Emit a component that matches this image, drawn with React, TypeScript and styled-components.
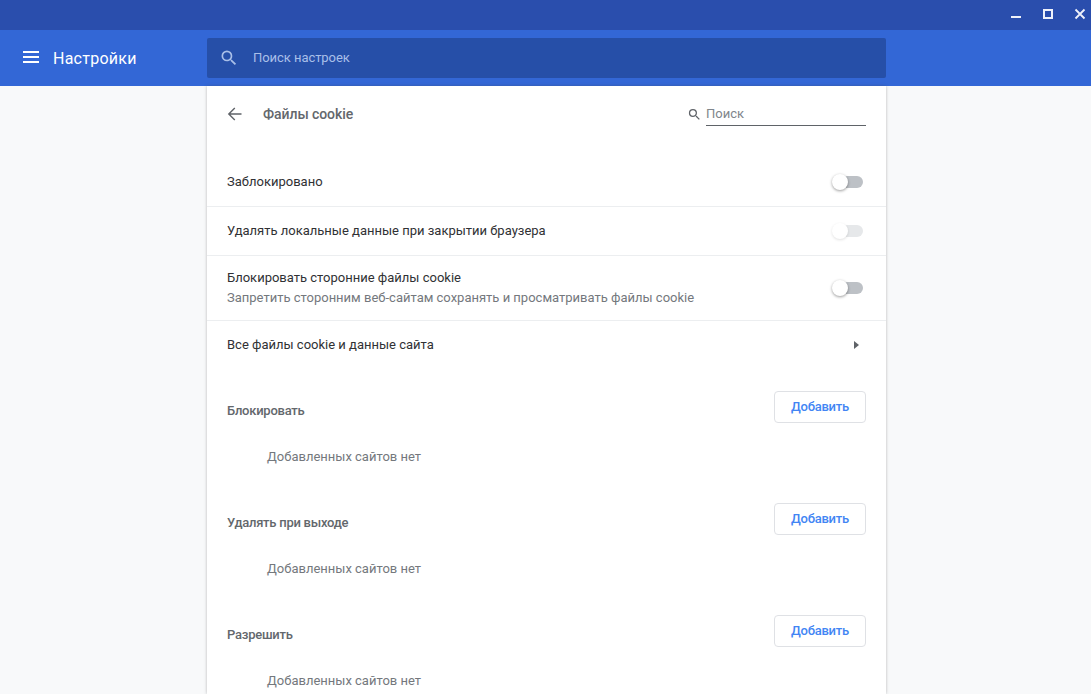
import React from "react";
import styled, { createGlobalStyle } from "styled-components";

const Global = createGlobalStyle`
  html, body { margin: 0; height: 100%; overflow: hidden; background: #f8f9fa; }
  body { font-family: Roboto, "Noto Sans", sans-serif; font-size: 13px; }
  * { box-sizing: border-box; }
`;

const Page = styled.div`
  width: 1091px;
  height: 694px;
  display: flex;
  flex-direction: column;
  overflow: hidden;
`;
const TitleBar = styled.div`
  height: 30px;
  flex: none;
  background: #2a4ead;
  display: flex;
  justify-content: flex-end;
  align-items: flex-start;
  gap: 10px;
  color: #eef1fa;
`;
const WinButton = styled.div`
  width: 22px;
  height: 30px;
  padding-top: 8px;
  display: flex;
  justify-content: center;
  svg { display: block; }
`;
const Header = styled.header`
  height: 56px;
  flex: none;
  background: #3367d6;
  display: flex;
  align-items: center;
`;
const Brand = styled.div`
  width: 207px;
  flex: none;
  display: flex;
  align-items: center;
  padding-left: 23px;
  gap: 12px;
  color: #fff;
  font-size: 16px;
  letter-spacing: 0.25px;
`;
const HeaderSearch = styled.div`
  width: 679px;
  height: 40px;
  background: #264fa8;
  border-radius: 2px;
  display: flex;
  align-items: center;
  padding-left: 12px;
  gap: 14px;
  color: #a9bfe8;
  font-size: 13px;
  letter-spacing: -0.05px;
`;
const SearchLabel = styled.span`
  margin-bottom: 2px;
`;
const Body = styled.main`
  flex: 1;
  display: flex;
  padding-left: 207px;
  min-height: 0;
`;
const Card = styled.section`
  width: 679px;
  background: #fff;
  box-shadow: 0 0 3px rgba(60, 64, 67, 0.35);
  overflow: hidden;
  padding-bottom: 40px;
`;
const SubPage = styled.div`
  height: 56px;
  display: flex;
  align-items: center;
  padding: 0 20px 0 19px;
  margin-bottom: 16px;
`;
const BackButton = styled.div`
  width: 18px;
  height: 18px;
  margin-right: 19px;
  color: #5f6368;
  svg { display: block; }
`;
const SubTitle = styled.h1`
  margin: 0;
  font-size: 14px;
  font-weight: 500;
  letter-spacing: -0.08px;
  color: #63676c;
  flex: 1;
`;
const MiniSearch = styled.div`
  display: flex;
  align-items: center;
  gap: 4px;
`;
const MiniInput = styled.div`
  width: 160px;
  height: 24px;
  border-bottom: 1px solid #5f6368;
  color: #80868b;
  font-size: 13px;
  line-height: 24px;
`;
const Row = styled.div<{ $h: number; $last?: boolean }>`
  height: ${(p) => p.$h}px;
  display: flex;
  align-items: center;
  padding: 0 23px 0 20px;
  border-bottom: ${(p) => (p.$last ? "none" : "1px solid #eceef0")};
`;
const RowText = styled.div`
  flex: 1;
  color: #303134;
  font-size: 13px;
  line-height: 20px;
`;
const Secondary = styled.div`
  color: #74787d;
`;
const Toggle = styled.div<{ $disabled?: boolean }>`
  position: relative;
  width: 24px;
  height: 12px;
  border-radius: 6px;
  background: ${(p) => (p.$disabled ? "#e6e8ea" : "#bdc1c6")};
  &::before {
    content: "";
    position: absolute;
    left: -7px;
    top: -2px;
    width: 16px;
    height: 16px;
    border-radius: 50%;
    background: #fff;
    box-shadow: 0 1px 3px rgba(0, 0, 0, ${(p) => (p.$disabled ? 0.12 : 0.4)});
  }
`;
const Arrow = styled.div`
  width: 0;
  height: 0;
  margin-right: 4px;
  border-left: 5px solid #5f6368;
  border-top: 4px solid transparent;
  border-bottom: 4px solid transparent;
`;
const Section = styled.div`
  padding: 0 20px;
  height: 112px;
`;
const SectionHead = styled.div`
  height: 32px;
  display: flex;
  justify-content: space-between;
  align-items: center;
`;
const SectionTitle = styled.h2`
  margin: 6px 0 0;
  font-size: 13px;
  font-weight: 500;
  letter-spacing: -0.25px;
  color: #63676c;
`;
const AddButton = styled.button`
  width: 92px;
  height: 32px;
  background: #fff;
  border: 1px solid #dfe1e5;
  border-radius: 4px;
  color: #4285f4;
  font: 500 13px Roboto, sans-serif;
  letter-spacing: -0.25px;
  padding: 0 0 2px;
`;
const Empty = styled.div`
  margin-top: 24px;
  padding-left: 40px;
  color: #74787d;
  font-size: 13px;
  line-height: 20px;
`;
const Sections = styled.div`
  padding-top: 22px;
`;

const SearchIcon = ({ size, color }: { size: number; color: string }) => (
  <svg width={size} height={size} viewBox="0 0 24 24" fill={color}>
    <path d="M15.5 14h-.79l-.28-.27A6.47 6.47 0 0 0 16 9.5 6.5 6.5 0 1 0 9.5 16c1.61 0 3.09-.59 4.23-1.57l.27.28v.79l5 4.99L20.49 19l-4.99-5zm-6 0C7.01 14 5 11.99 5 9.5S7.01 5 9.5 5 14 7.01 14 9.5 11.99 14 9.5 14z" />
  </svg>
);

const sections = ["Блокировать", "Удалять при выходе", "Разрешить"];

export default function App() {
  return (
    <Page>
      <Global />
      <TitleBar>
        <WinButton>
          <svg width="12" height="12" viewBox="0 0 12 12"><rect x="1" y="8" width="10" height="2" fill="currentColor" /></svg>
        </WinButton>
        <WinButton>
          <svg width="12" height="12" viewBox="0 0 12 12"><rect x="2" y="2" width="8" height="8" fill="none" stroke="currentColor" strokeWidth="2" /></svg>
        </WinButton>
        <WinButton>
          <svg width="12" height="12" viewBox="0 0 12 12"><path d="M1.5 1.5l9 9M10.5 1.5l-9 9" stroke="currentColor" strokeWidth="1.8" /></svg>
        </WinButton>
      </TitleBar>
      <Header>
        <Brand>
          <svg width="18" height="18" viewBox="0 0 18 18" fill="#fff">
            <rect x="0" y="2" width="16" height="2" />
            <rect x="0" y="7" width="16" height="2" />
            <rect x="0" y="12" width="16" height="2" />
          </svg>
          <span>Настройки</span>
        </Brand>
        <HeaderSearch>
          <SearchIcon size={20} color="#a9bfe8" />
          <SearchLabel>Поиск настроек</SearchLabel>
        </HeaderSearch>
      </Header>
      <Body>
        <Card>
          <SubPage>
            <BackButton>
              <svg width="18" height="18" viewBox="0 0 18 18" fill="none" stroke="currentColor" strokeWidth="1.4">
                <path d="M15.5 9H2.8M8.8 3L2.8 9l6 6" />
              </svg>
            </BackButton>
            <SubTitle>Файлы cookie</SubTitle>
            <MiniSearch>
              <SearchIcon size={15} color="#5f6368" />
              <MiniInput>Поиск</MiniInput>
            </MiniSearch>
          </SubPage>
          <Row $h={49}>
            <RowText>Заблокировано</RowText>
            <Toggle />
          </Row>
          <Row $h={49}>
            <RowText>Удалять локальные данные при закрытии браузера</RowText>
            <Toggle $disabled />
          </Row>
          <Row $h={65}>
            <RowText>
              Блокировать сторонние файлы cookie
              <Secondary>Запретить сторонним веб-сайтам сохранять и просматривать файлы cookie</Secondary>
            </RowText>
            <Toggle />
          </Row>
          <Row $h={48} $last>
            <RowText>Все файлы cookie и данные сайта</RowText>
            <Arrow />
          </Row>
          <Sections>
            {sections.map((s) => (
              <Section key={s}>
                <SectionHead>
                  <SectionTitle>{s}</SectionTitle>
                  <AddButton>Добавить</AddButton>
                </SectionHead>
                <Empty>Добавленных сайтов нет</Empty>
              </Section>
            ))}
          </Sections>
        </Card>
      </Body>
    </Page>
  );
}
